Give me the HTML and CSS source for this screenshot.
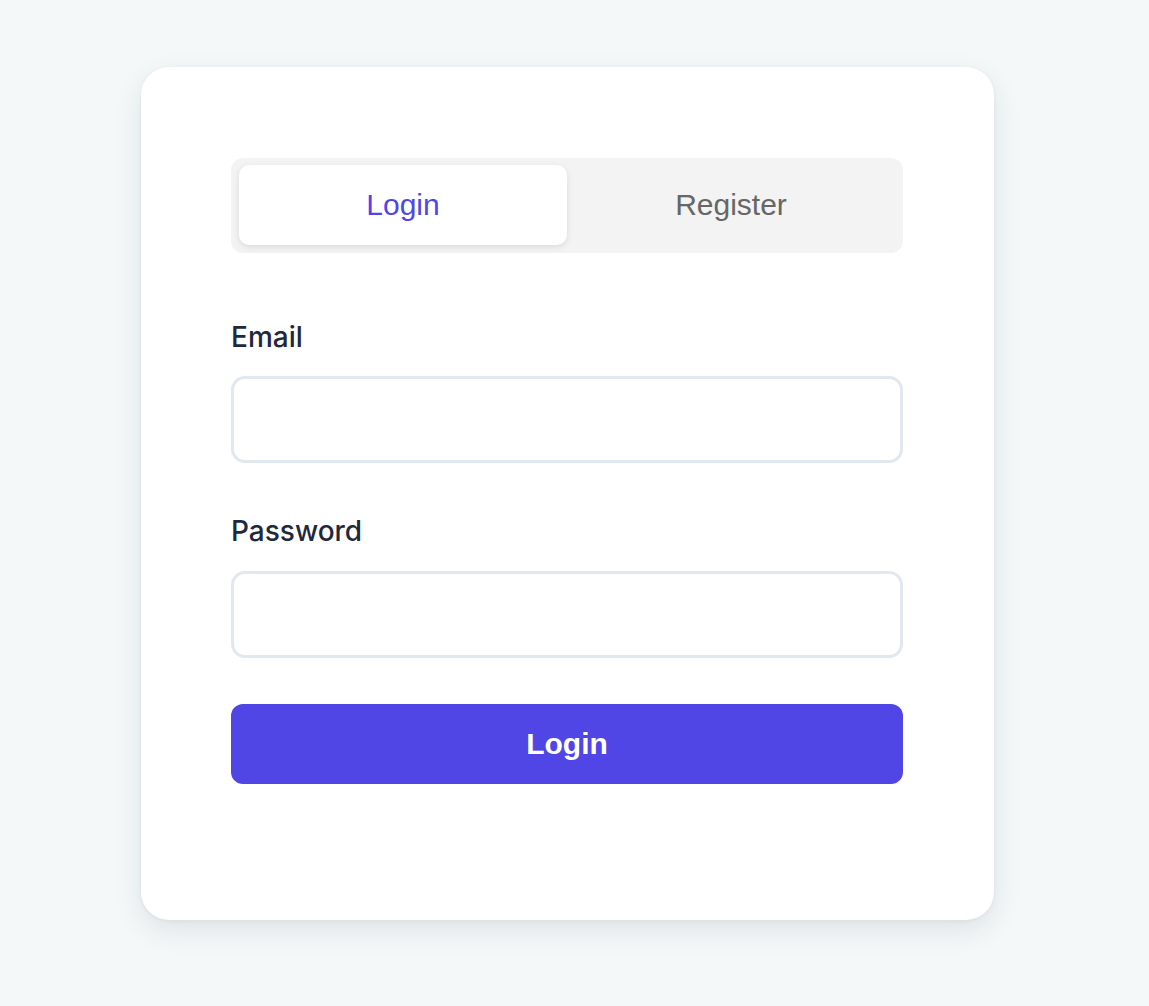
FILE: index.html
```html
<!DOCTYPE html>
<html lang="en">
<head>
<meta charset="utf-8">
<title>Login</title>
<link rel="stylesheet" href="styles.css">
</head>
<body>
<main class="card">
  <div class="tabs">
    <button class="tab tab-active" type="button">Login</button>
    <button class="tab" type="button">Register</button>
  </div>
  <form class="form">
    <label class="label" for="email">Email</label>
    <input class="input" id="email" type="email">
    <label class="label label-pw" for="password">Password</label>
    <input class="input" id="password" type="password">
    <button class="submit" type="button">Login</button>
  </form>
</main>
</body>
</html>
```

FILE: styles.css
```css
html, body {
  margin: 0;
  padding: 0;
}
body {
  background: #f4f8f9;
  min-height: 1006px;
  font-family: "Liberation Sans", Arial, sans-serif;
}
.card {
  box-sizing: border-box;
  width: 853px;
  height: 853px;
  margin: 67px 0 0 141px;
  padding: 91px 91px 0 90px;
  background: #ffffff;
  border-radius: 28px;
  box-shadow: 0 10px 28px rgba(30, 40, 50, 0.10), 0 1px 4px rgba(30, 40, 50, 0.05);
}
.tabs {
  display: grid;
  grid-template-columns: 1fr 1fr;
  padding: 7px 8px 8px 8px;
  height: 95px;
  box-sizing: border-box;
  background: #f3f3f3;
  border-radius: 12px;
}
.tab {
  border: 0;
  background: transparent;
  font-family: "Liberation Sans", Arial, sans-serif;
  font-size: 30px;
  color: #666666;
  padding: 0;
  border-radius: 10px;
  cursor: pointer;
}
.tab-active {
  background: #ffffff;
  color: #4f46e5;
  box-shadow: 0 2px 6px rgba(0, 0, 0, 0.10);
}
.form {
  display: flex;
  flex-direction: column;
  margin-top: 68px;
}
.label {
  font-family: Inter, "Noto Sans", sans-serif;
  font-weight: 500;
  font-size: 28px;
  line-height: 32px;
  color: #1e293b;
  margin-bottom: 23px;
}
.label-pw {
  margin-top: 52px;
  margin-bottom: 24px;
}
.input {
  box-sizing: border-box;
  height: 87px;
  width: 100%;
  border: 3px solid #e2e8f0;
  border-radius: 14px;
  background: #ffffff;
  margin: 0;
  outline: none;
}
.submit {
  margin-top: 46px;
  height: 80px;
  border: 0;
  border-radius: 12px;
  background: #4f46e5;
  color: #ffffff;
  font-family: "Liberation Sans", Arial, sans-serif;
  font-weight: 700;
  font-size: 30px;
  cursor: pointer;
}
```
